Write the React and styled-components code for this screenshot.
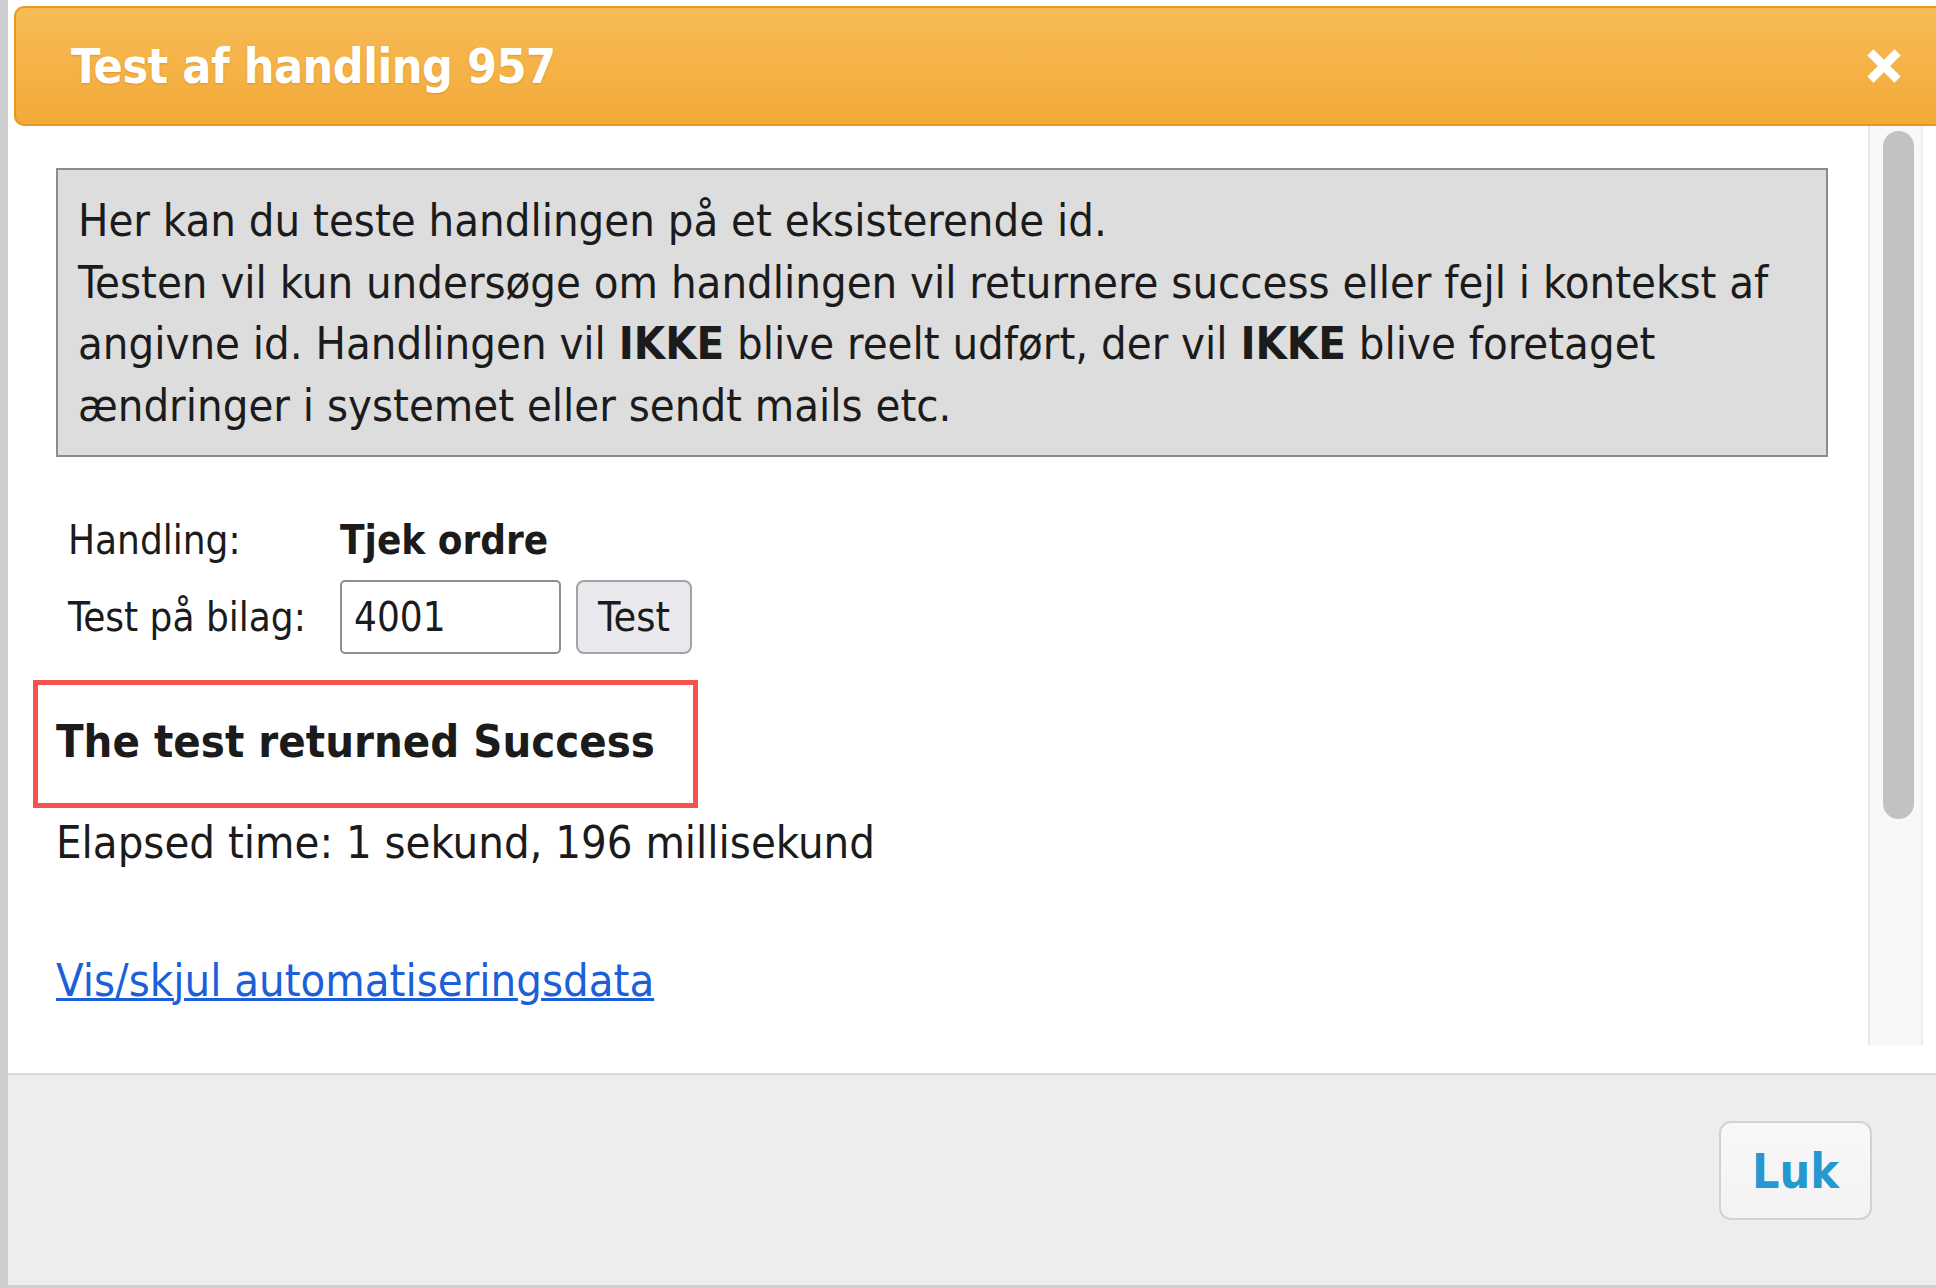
import React from 'react';
import styled, { createGlobalStyle } from 'styled-components';
import { X } from 'lucide-react';

const GlobalStyle = createGlobalStyle`
  html, body { margin: 0; padding: 0; background: #fff; }
  body { font-family: "DejaVu Sans Condensed", "DejaVu Sans", sans-serif; color: #1b1b1b; }
`;

const Window = styled.div`
  height: 100vh;
  display: flex;
  flex-direction: column;
  box-sizing: border-box;
  border-left: 8px solid #cdcdcd;
  background: #fff;
  overflow: hidden;
`;

const Header = styled.div`
  height: 120px;
  margin: 6px 0 0 6px;
  box-sizing: border-box;
  display: flex;
  align-items: center;
  justify-content: space-between;
  padding: 0 31px 0 55px;
  background: linear-gradient(#f7bb57, #f3aa38);
  border: 2px solid #e8961d;
  border-right: none;
  border-radius: 10px 0 0 10px;
  flex-shrink: 0;
`;

const Title = styled.div`
  font-size: 48px;
  font-weight: bold;
  color: #fff;
  text-shadow: 0 1px 2px rgba(180, 100, 0, 0.35);
  letter-spacing: -0.5px;
`;

const Close = styled.button`
  background: none;
  border: none;
  padding: 0;
  display: flex;
  color: #fff;
  cursor: pointer;
`;

const Body = styled.div`
  flex: 1;
  display: flex;
  min-height: 0;
`;

const Content = styled.div`
  flex: 1;
  padding: 42px 40px 0 48px;
`;

const InfoBox = styled.div`
  background: #dddddd;
  border: 2px solid #8c8c8c;
  padding: 20px 20px 19px 20px;
  font-size: 45px;
  line-height: 61.5px;
  white-space: nowrap;
`;

const FormGrid = styled.div`
  display: grid;
  grid-template-columns: 272px auto;
  align-items: center;
  justify-content: start;
  row-gap: 15px;
  margin: 58px 0 0 12px;
  font-size: 40px;
  line-height: 50px;
`;

const Value = styled.div`
  font-weight: ${p => (p.$bold ? 'bold' : 'normal')};
  display: flex;
  align-items: center;
  gap: 15px;
`;

const Input = styled.input`
  width: 221px;
  height: 74px;
  box-sizing: border-box;
  border: 2px solid #8f8f8f;
  border-radius: 5px;
  padding: 0 12px;
  font-family: inherit;
  font-size: 40px;
  color: #1b1b1b;
`;

const TestButton = styled.button`
  width: 116px;
  height: 74px;
  box-sizing: border-box;
  background: #e9e9ed;
  border: 2px solid #a3a3a3;
  border-radius: 8px;
  font-family: inherit;
  font-size: 41px;
  color: #1b1b1b;
`;

const ResultBox = styled.div`
  width: 665px;
  box-sizing: border-box;
  margin: 26px 0 0 -23px;
  border: 5px solid #f4544c;
  padding: 32px 0 36px 18px;
  font-size: 45px;
  line-height: 50px;
  font-weight: bold;
  white-space: nowrap;
`;

const Elapsed = styled.div`
  margin-top: 10px;
  font-size: 45px;
  line-height: 50px;
  white-space: nowrap;
`;

const Link = styled.a`
  display: inline-block;
  margin-top: 88px;
  font-size: 45px;
  line-height: 50px;
  color: #1d5fd8;
  text-decoration: underline;
  text-decoration-thickness: 3px;
  cursor: pointer;
`;

const Track = styled.div`
  width: 55px;
  height: 919px;
  margin-right: 13px;
  box-sizing: border-box;
  background: #f8f8f8;
  border-left: 2px solid #e8e8e8;
  border-right: 2px solid #ececec;
  padding: 5px 0 0 13px;
  flex-shrink: 0;
`;

const Thumb = styled.div`
  width: 31px;
  height: 688px;
  border-radius: 16px;
  background: #c2c2c2;
`;

const Footer = styled.div`
  height: 215px;
  box-sizing: border-box;
  flex-shrink: 0;
  background: #ededed;
  border-top: 2px solid #dadada;
  border-bottom: 3px solid #cfcfcf;
  display: flex;
  justify-content: flex-end;
  align-items: flex-start;
  padding: 46px 64px 0 0;
`;

const LukButton = styled.button`
  width: 153px;
  height: 99px;
  box-sizing: border-box;
  background: linear-gradient(#f8f8f8, #f3f3f3);
  border: 2px solid #d2d2d2;
  border-radius: 12px;
  font-family: inherit;
  font-size: 48px;
  font-weight: bold;
  color: #2598d0;
  cursor: pointer;
`;

export default function App() {
  return (
    <>
      <GlobalStyle />
      <Window>
        <Header>
          <Title>Test af handling 957</Title>
          <Close aria-label="Luk">
            <X size={42} strokeWidth={5} strokeLinecap="square" />
          </Close>
        </Header>
        <Body>
          <Content>
            <InfoBox>
              Her kan du teste handlingen på et eksisterende id.<br />
              Testen vil kun undersøge om handlingen vil returnere success eller fejl i kontekst af<br />
              angivne id. Handlingen vil <b>IKKE</b> blive reelt udført, der vil <b>IKKE</b> blive foretaget<br />
              ændringer i systemet eller sendt mails etc.
            </InfoBox>
            <FormGrid>
              <div>Handling:</div>
              <Value $bold>Tjek ordre</Value>
              <div>Test på bilag:</div>
              <Value>
                <Input defaultValue="4001" />
                <TestButton>Test</TestButton>
              </Value>
            </FormGrid>
            <ResultBox>The test returned Success</ResultBox>
            <Elapsed>Elapsed time: 1 sekund, 196 millisekund</Elapsed>
            <Link>Vis/skjul automatiseringsdata</Link>
          </Content>
          <Track>
            <Thumb />
          </Track>
        </Body>
        <Footer>
          <LukButton>Luk</LukButton>
        </Footer>
      </Window>
    </>
  );
}
